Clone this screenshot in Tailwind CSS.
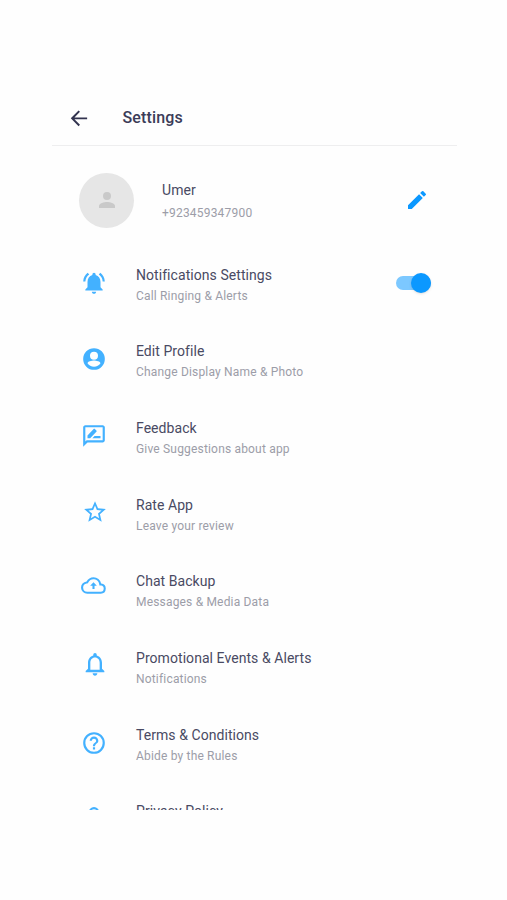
<!DOCTYPE html>
<html lang="en">
<head>
<meta charset="utf-8">
<title>Settings</title>
<script src="https://cdn.jsdelivr.net/npm/@tailwindcss/browser@4"></script>
</head>
<body class="bg-[#fefefe] font-[Roboto,sans-serif] text-[#494a63]">
<main class="ml-[52px] mt-[90px] h-[720px] w-[405px] overflow-hidden">
  <header class="flex h-[56px] items-center border-b border-[#eeeeef] pl-[14px]">
    <svg class="size-[26px] fill-[#32334f]" viewBox="0 0 24 24"><path d="M19.500 11.500H7.800l5.100-5.200L11.600 5l-7.200 7.300 7.200 7.300 1.300-1.300-5.100-5.100h11.700z"/></svg>
    <h1 class="ml-[30.500px] pt-px text-[16px] font-medium tracking-[0.160px] text-[#3b3c58]">Settings</h1>
  </header>
  <section class="flex h-[98px] items-start pl-[27px] pt-[26.500px]">
    <div class="flex size-[55px] items-center justify-center rounded-full bg-[#e6e6e6]">
      <svg class="size-6 fill-[#c9c9c9]" viewBox="0 0 24 24"><circle cx="12" cy="8" r="4"/><path d="M12 14c-2.700 0-8 1.300-8 4v2h16v-2c0-2.700-5.300-4-8-4z"/></svg>
    </div>
    <div class="ml-[28px] w-[243px] pt-[6.500px]">
      <h2 class="text-[14px] leading-[22px] tracking-[0.1px]">Umer</h2>
      <p class="text-[12px] leading-[24px] tracking-[0.2px] text-[#9c9da8]">+923459347900</p>
    </div>
    <svg class="mt-[15.500px] size-6 fill-[#0b98ff]" viewBox="0 0 24 24"><path d="M3 17.250V21h3.750L17.810 9.940l-3.750-3.750L3 17.250zM20.710 7.040a1 1 0 0 0 0-1.410l-2.340-2.340a1 1 0 0 0-1.410 0l-1.830 1.830 3.750 3.750 1.830-1.830z"/></svg>
  </section>
  <ul class="pt-[20px] text-[14px] leading-[20px] tracking-[0.060px]">
    <li class="flex h-[76.700px] items-start pl-[28.800px]">
      <svg class="mt-[5.500px] size-[26px] fill-[#43b1ff]" viewBox="0 0 24 24"><path d="M7.580 4.080 6.150 2.650C3.750 4.480 2.170 7.300 2.030 10.500h2c.15-2.650 1.510-4.970 3.550-6.420zm12.390 6.420h2c-.15-3.200-1.730-6.020-4.120-7.850l-1.420 1.430a8.500 8.500 0 0 1 3.540 6.420zM18 11c0-3.070-1.640-5.640-4.500-6.320V4a1.500 1.500 0 0 0-3 0v.68C7.630 5.360 6 7.920 6 11v5l-2 2v1h16v-1l-2-2v-5zm-6 11c1.100 0 2-.9 2-2h-4c0 1.100.9 2 2 2z"/></svg>
      <div class="ml-[29.200px] w-[260px] pt-[0.600px]"><h3>Notifications Settings</h3><p class="text-[12px] leading-[22px] tracking-[0.180px] text-[#9c9da8]">Call Ringing &amp; Alerts</p></div>
      <div class="mt-[12px] flex h-[14px] w-[35px] items-center justify-end rounded-full bg-[#7cc8ff]"><span class="size-[20px] shrink-0 rounded-full bg-[#0b98ff] shadow-sm"></span></div>
    </li>
    <li class="flex h-[76.700px] items-start pl-[28.800px]">
      <svg class="mt-[5.500px] size-[26px] fill-[#43b1ff]" viewBox="0 0 24 24"><path d="M12 2a10 10 0 1 0 0 20 10 10 0 0 0 0-20zm0 3.200a3.700 3.700 0 1 1 0 7.400 3.700 3.700 0 0 1 0-7.400zm0 14a7.200 7.200 0 0 1-6-3.220c.03-1.790 4-2.600 6-2.600s5.970.81 6 2.600a7.200 7.200 0 0 1-6 3.220z"/></svg>
      <div class="ml-[29.200px] pt-[0.600px]"><h3>Edit Profile</h3><p class="text-[12px] leading-[22px] tracking-[0.180px] text-[#9c9da8]">Change Display Name &amp; Photo</p></div>
    </li>
    <li class="flex h-[76.700px] items-start pl-[28.800px]">
      <svg class="mt-[5.500px] size-[26px] fill-[#43b1ff]" viewBox="0 0 24 24"><path d="M20 2H4c-1.100 0-2 .9-2 2v18l4-4h14c1.100 0 2-.9 2-2V4c0-1.100-.9-2-2-2zm0 14H5.170L4 17.170V4h16v12zM10.500 14H18v-2h-5.500zM14.360 7.870c.2-.2.200-.51 0-.71l-1.770-1.770a.5.500 0 0 0-.71 0L6 11.530V14h2.470z"/></svg>
      <div class="ml-[29.200px] pt-[0.900px]"><h3>Feedback</h3><p class="text-[12px] leading-[22px] tracking-[0.180px] text-[#9c9da8]">Give Suggestions about app</p></div>
    </li>
    <li class="flex h-[76.700px] items-start pl-[30.300px]">
      <svg class="mt-[4.500px] size-[26px] fill-[#43b1ff]" viewBox="0 0 24 24"><path d="m22 9.240-7.190-.62L12 2 9.190 8.630 2 9.240l5.460 4.730L5.820 21 12 17.270 18.180 21l-1.630-7.030L22 9.240zM12 15.400l-3.760 2.270 1-4.280-3.320-2.880 4.380-.38L12 6.100l1.710 4.040 4.380.38-3.320 2.880 1 4.280L12 15.400z"/></svg>
      <div class="ml-[27.700px] pt-[0.600px]"><h3>Rate App</h3><p class="text-[12px] leading-[22px] tracking-[0.180px] text-[#9c9da8]">Leave your review</p></div>
    </li>
    <li class="flex h-[76.700px] items-start pl-[28.800px]">
      <svg class="mt-[2.500px] size-[25px] fill-[#43b1ff]" viewBox="0 0 24 24"><path d="M19.350 10.040A7.490 7.490 0 0 0 12 4C9.110 4 6.600 5.640 5.350 8.040A6 6 0 0 0 6 20h13a5 5 0 0 0 .35-9.960zM19 18H6a4 4 0 0 1-.44-7.970l1.070-.11.500-.95a5.500 5.500 0 0 1 10.260 1.460l.3 1.500 1.530.11A3 3 0 0 1 19 18z"/><path d="m12 8.900-3.200 3.400h2.200v3h2v-3h2.200z"/></svg>
      <div class="ml-[30.200px] pt-[0.600px]"><h3>Chat Backup</h3><p class="text-[12px] leading-[22px] tracking-[0.180px] text-[#9c9da8]">Messages &amp; Media Data</p></div>
    </li>
    <li class="flex h-[76.700px] items-start pl-[29px]">
      <svg class="mt-[3px] size-[28px] fill-[#43b1ff]" viewBox="0 0 24 24"><path d="M12 22c1.100 0 2-.9 2-2h-4c0 1.100.9 2 2 2zm6-6v-5c0-3.070-1.630-5.640-4.500-6.320V4a1.500 1.500 0 0 0-3 0v.68C7.640 5.360 6 7.920 6 11v5l-2 2v1h16v-1l-2-2zm-2 1H8v-6c0-2.480 1.510-4.500 4-4.500s4 2.020 4 4.500v6z"/></svg>
      <div class="ml-[27px] pt-[0.900px]"><h3>Promotional Events &amp; Alerts</h3><p class="text-[12px] leading-[22px] tracking-[0.180px] text-[#9c9da8]">Notifications</p></div>
    </li>
    <li class="flex h-[76.700px] items-start pl-[28.800px]">
      <svg class="mt-[5.500px] size-[26px] fill-[#43b1ff]" viewBox="0 0 24 24"><path d="M11 18h2v-2h-2v2zm1-16a10 10 0 1 0 0 20 10 10 0 0 0 0-20zm0 18a8 8 0 1 1 0-16 8 8 0 0 1 0 16zm0-14a4 4 0 0 0-4 4h2a2 2 0 1 1 4 0c0 2-3 1.750-3 5h2c0-2.250 3-2.500 3-5a4 4 0 0 0-4-4z"/></svg>
      <div class="ml-[29.200px] pt-[0.900px]"><h3>Terms &amp; Conditions</h3><p class="text-[12px] leading-[22px] tracking-[0.180px] text-[#9c9da8]">Abide by the Rules</p></div>
    </li>
    <li class="flex h-[76.700px] items-start pl-[28.800px]">
      <svg class="mt-[5.500px] size-[26px] fill-[#43b1ff]" viewBox="0 0 24 24"><path d="M18 8h-1V6A5 5 0 0 0 7 6v2H6a2 2 0 0 0-2 2v10c0 1.100.9 2 2 2h12a2 2 0 0 0 2-2V10a2 2 0 0 0-2-2zM9 6a3 3 0 0 1 6 0v2H9zm9 14H6V10h12z"/></svg>
      <div class="ml-[29.200px] pt-[0.600px]"><h3>Privacy Policy</h3></div>
    </li>
  </ul>
</main>
</body>
</html>
